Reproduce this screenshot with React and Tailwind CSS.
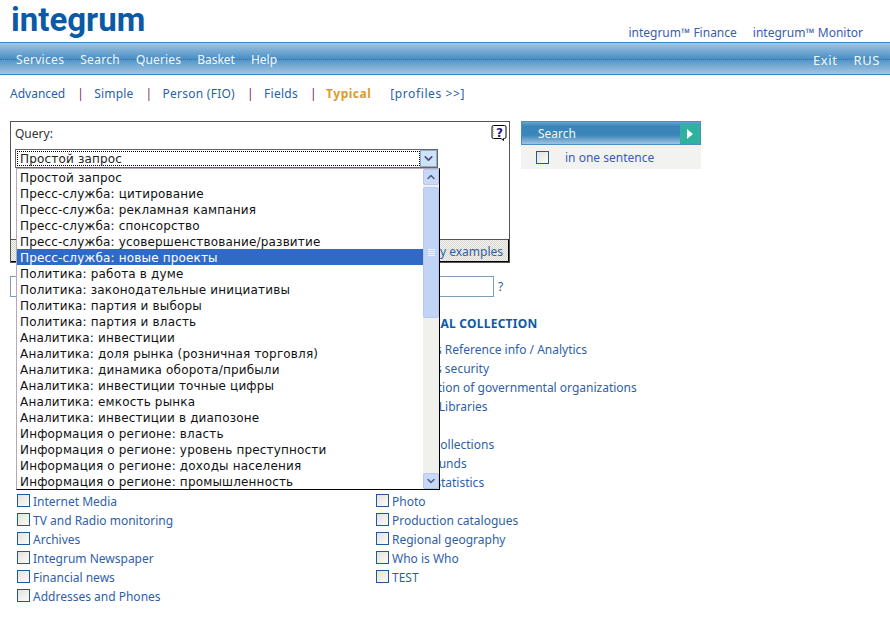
import { ChevronDown, ChevronUp } from "lucide-react";

const queries = [
  "Простой запрос",
  "Пресс-служба: цитирование",
  "Пресс-служба: рекламная кампания",
  "Пресс-служба: спонсорство",
  "Пресс-служба: усовершенствование/развитие",
  "Пресс-служба: новые проекты",
  "Политика: работа в думе",
  "Политика: законодательные инициативы",
  "Политика: партия и выборы",
  "Политика: партия и власть",
  "Аналитика: инвестиции",
  "Аналитика: доля рынка (розничная торговля)",
  "Аналитика: динамика оборота/прибыли",
  "Аналитика: инвестиции точные цифры",
  "Аналитика: емкость рынка",
  "Аналитика: инвестиции в диапозоне",
  "Информация о регионе: власть",
  "Информация о регионе: уровень преступности",
  "Информация о регионе: доходы населения",
  "Информация о регионе: промышленность",
];

const leftRows = ["Internet Media", "TV and Radio monitoring", "Archives", "Integrum Newspaper", "Financial news", "Addresses and Phones"];
const rightTop = ["Business Reference info / Analytics", "Business security", "Information of governmental organizations", "Medical Libraries", "", "Special collections", "Special funds", "Market statistics"];
const rightRows = ["Photo", "Production catalogues", "Regional geography", "Who is Who", "TEST"];

function Check() {
  return <span className="mb-[3px] block h-[13px] w-[13px] shrink-0 border border-[#1c5a9c] bg-gradient-to-br from-[#e4e2da] to-[#fbfbf9]" />;
}

function Row({ label }) {
  return (
    <div className="flex h-[19px] items-center">
      {label && <Check />}
      <span className="ml-[3px] whitespace-nowrap text-[#2f5fa8]">{label}</span>
    </div>
  );
}

function Sep() {
  return <span className="ml-[12px] inline-block w-[17px] text-[#7a1f5e]">|</span>;
}

function HelpIcon() {
  return (
    <svg width="17" height="18" viewBox="0 0 17 18" className="absolute right-px top-[2px]">
      <path d="M2.5 1.5h11a1.5 1.5 0 0 1 1.5 1.5v10a1.5 1.5 0 0 1-1.5 1.5h-1v2l-2.5-2h-7.500a1.500 1.500 0 0 1-1.500-1.500v-10a1.500 1.500 0 0 1 1.500-1.500z" fill="#fff" stroke="#000" />
      <path d="M2.500 3v9.500" stroke="#e8b35a" strokeDasharray="1 1" />
      <text x="8.500" y="12.500" textAnchor="middle" fontSize="12" fontWeight="700" fill="#1a1a8c" fontFamily="DejaVu Sans, sans-serif">?</text>
    </svg>
  );
}

export default function App() {
  return (
    <div className="relative h-[620px] w-[890px] overflow-hidden bg-white font-['Noto_Sans',sans-serif] text-[12px] leading-[16px]">
      <header className="flex h-[42px] items-start justify-between pl-[11px] pr-[27px]">
        <div className="font-['Roboto',sans-serif] text-[33px] font-bold leading-[40px] text-[#0b5aa5]">integrum</div>
        <div className="mt-[25px] flex gap-[16px] text-[#3a5cb0]">
          <span>integrum™ Finance</span>
          <span>integrum™ Monitor</span>
        </div>
      </header>

      <nav className="relative flex h-[33px] items-center justify-between border-y border-[#3d88c0] bg-gradient-to-b from-[#a4c6e2] via-[#4a90c5] to-[#a4c6e2] pl-[16px] pr-[10px] pt-[2px] text-[#f4f8fb]">
        <div className="absolute inset-x-0 top-[16px] border-t border-dotted border-[#2f74aa]" />
        <div className="relative flex gap-[16px]">
          <span className="tracking-[0.3px]">Services</span>
          <span className="tracking-[0.3px]">Search</span>
          <span className="tracking-[0.15px]">Queries</span>
          <span>Basket</span>
          <span>Help</span>
        </div>
        <div className="relative flex gap-[16px] text-[13px] tracking-[0.6px]">
          <span>Exit</span>
          <span>RUS</span>
        </div>
      </nav>

      <div className="flex h-[37px] items-center pl-[10px] text-[#2a5fa5]">
        <span>Advanced</span>
        <Sep />
        <span className="tracking-[0.2px]">Simple</span>
        <Sep />
        <span className="tracking-[0.25px]">Person (FIO)</span>
        <Sep />
        <span className="tracking-[0.3px]">Fields</span>
        <Sep />
        <span className="-ml-px font-bold tracking-[0.5px] text-[#dd9a2c]">Typical</span>
        <span className="ml-[19px] tracking-[0.6px]">[profiles &gt;&gt;]</span>
      </div>

      <div className="mt-[9px] flex items-start pl-[10px]">
        <div className="relative h-[142px] w-[500px] border border-[#555]">
          <div className="pl-[4px] pt-[4px] text-[#333]">Query:</div>
          <HelpIcon />
          <div className="absolute left-[4px] top-[27px] flex h-[19px] w-[423px] items-center border border-[#666] pl-[1px] font-['DejaVu_Sans',sans-serif] tracking-[0.17px]">
            <div className="flex h-[15px] flex-1 items-center border border-dotted border-black pl-[2px] text-[#222]">Простой запрос</div>
            <div className="flex h-[17px] w-[17px] items-center justify-center border border-[#8eaecb] bg-[#cfe3f8] text-[#4a4a8a]">
              <ChevronDown size={13} strokeWidth={3} />
            </div>
          </div>
          <div className="absolute inset-x-0 bottom-0 h-[23px] border-t border-[#555] border-b border-r border-b-black border-r-black bg-[repeating-conic-gradient(#d6d4ce_0_25%,#f6f5f1_0_50%)] bg-[length:2px_2px] pr-[5px] pt-[4px] text-right text-[#2f5fa8]">Query examples</div>
        </div>

        <div className="ml-[11px] w-[180px]">
          <div className="relative flex h-[24px] items-center justify-between border border-[#4a8dc0] bg-[linear-gradient(#6aa5d0_0,#3a86bb_4px,#3a86bb_60%,#a2c4e0_100%)] pl-[16px] pt-px text-[#f4f8fb]">
            <span>Search</span>
            <div className="flex h-[20px] w-[20px] items-center justify-center bg-[#2fb1a0]">
              <span className="h-0 w-0 border-y-[5px] border-l-[6px] border-y-transparent border-l-white" />
            </div>
          </div>
          <div className="flex h-[24px] items-center bg-[#f2f2f0] pl-[15px] text-[#3a5cb0]">
            <span className="block h-[13px] w-[13px] shrink-0 border border-[#1c5a9c] bg-gradient-to-br from-[#e4e2da] to-[#fbfbf9]" />
            <span className="ml-[16px] pt-[2px]">in one sentence</span>
          </div>
        </div>
      </div>

      <div className="mt-[13px] flex items-center pl-[10px]">
        <div className="h-[21px] w-[484px] border border-[#7f9db9]" />
        <span className="ml-[4px] pt-px text-[#2a5fa5]">?</span>
      </div>

      <div className="mt-[19px] flex items-start">
        <div className="ml-[17px] mt-[176px] w-[359px]">
          {leftRows.map((label) => (
            <Row key={label} label={label} />
          ))}
        </div>
        <div>
          <div className="mb-[8px] h-[16px] pl-[30px] font-bold tracking-[0.25px] text-[#0b5aa5]">SPECIAL COLLECTION</div>
          {rightTop.map((label, i) => (
            <Row key={i} label={label} />
          ))}
          {rightRows.map((label) => (
            <Row key={label} label={label} />
          ))}
        </div>
      </div>

      <div className="absolute left-[16px] top-[168px] h-[322px] w-[424px] border border-black border-l-[#b7aab8] border-t-[#b7aab8] bg-white font-['DejaVu_Sans',sans-serif] tracking-[0.17px]">
        <div className="flex h-full">
          <div className="flex-1">
            {queries.map((q, i) => (
              <div key={q} className={i === 5 ? "h-[16px] whitespace-nowrap bg-[#316ac5] pl-[3px] pt-px text-white" : "h-[16px] whitespace-nowrap pl-[3px] pt-px text-[#111]"}>
                {q}
              </div>
            ))}
          </div>
          <div className="flex w-[16px] flex-col bg-[#f0f0ec]">
            <div className="flex h-[16px] items-center justify-center rounded-[2px] border border-[#b4c8ee] bg-[#c8d8f8] text-[#4d6185]">
              <ChevronUp size={12} strokeWidth={3} />
            </div>
            <div className="relative mt-[2px] h-[131px] rounded-[2px] border border-[#b4c8ee] bg-[#c1d4f5]">
              <div className="absolute left-[4px] top-[61px] flex w-[7px] flex-col gap-px">
                <span className="h-px bg-[#eef4fe]" />
                <span className="h-px bg-[#eef4fe]" />
                <span className="h-px bg-[#eef4fe]" />
                <span className="h-px bg-[#eef4fe]" />
              </div>
            </div>
            <div className="flex-1" />
            <div className="flex h-[16px] items-center justify-center rounded-[2px] border border-[#b4c8ee] bg-[#c8d8f8] text-[#4d6185]">
              <ChevronDown size={12} strokeWidth={3} />
            </div>
          </div>
        </div>
      </div>
    </div>
  );
}
